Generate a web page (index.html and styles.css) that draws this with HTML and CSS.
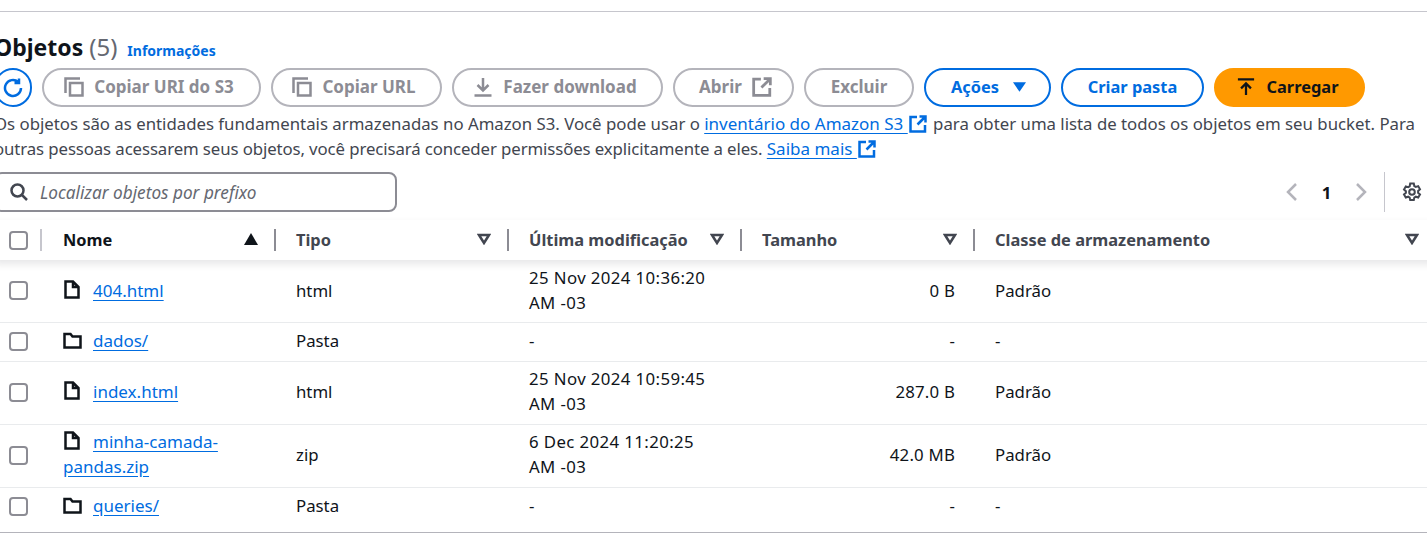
FILE: index.html
```html
<!DOCTYPE html>
<html lang="pt">
<head>
    <meta charset="UTF-8">
    <meta name="viewport" content="width=device-width, initial-scale=1.0">
    <title>Objetos</title>
    <link rel="stylesheet" href="styles.css">
</head>
<body>

    <svg class="sprites" width="0" height="0">
        <symbol id="i-copy" viewBox="0 0 20 20"><path d="M16 1.500H1.500V16M6 6h12.500v12.500H6z"/></symbol>
        <symbol id="i-download" viewBox="0 0 20 20"><path d="M10 1v12M4.500 8l5.500 5.500L15.500 8M1.500 18.500h17"/></symbol>
        <symbol id="i-external" viewBox="0 0 18 18"><path d="M8 2H1.500v14.500h14.500V10M10.500 1.500h6v6M16.500 1.500L8.500 9.500"/></symbol>
        <symbol id="i-file" viewBox="0 0 16 19"><path d="M1.500 1.500h7.500l5.500 5.500v10.500h-13zM9 1.500V7h5.500"/></symbol>
        <symbol id="i-folder" viewBox="0 0 19 17"><path d="M1.500 2h6l2 2.500h8v11h-16z"/></symbol>
        <symbol id="i-filter" viewBox="0 0 14 12"><path d="M2 2h10l-5 8z"/></symbol>
    </svg>

    <div class="page">
        <div class="top-rule"></div>

        <div class="heading">
            <h2>Objetos <span class="count">(5)</span></h2>
            <a class="info" href="#">Informações</a>
        </div>

        <div class="toolbar">
            <button class="btn btn-icon">
                <svg class="icon" viewBox="0 0 20 20"><path d="M18 10a8 8 0 1 1-2.700-6M16 0.500v4.500H11.500"/></svg>
            </button>
            <button class="btn btn-off w-uri"><svg class="icon"><use href="#i-copy"/></svg>Copiar URI do S3</button>
            <button class="btn btn-off w-url"><svg class="icon"><use href="#i-copy"/></svg>Copiar URL</button>
            <button class="btn btn-off w-down"><svg class="icon"><use href="#i-download"/></svg>Fazer download</button>
            <button class="btn btn-off w-open">Abrir<svg class="icon"><use href="#i-external"/></svg></button>
            <button class="btn btn-off w-del">Excluir</button>
            <button class="btn btn-line w-act">Ações<svg class="icon-caret" viewBox="0 0 14 10"><path d="M0 0h14L7 10z"/></svg></button>
            <button class="btn btn-line w-new">Criar pasta</button>
            <button class="btn btn-main w-up"><svg class="icon" viewBox="0 0 20 20"><path d="M1 1.500h18M10 19V6.500M4.500 11.500L10 6l5.500 5.500"/></svg>Carregar</button>
        </div>

        <p class="desc">Os objetos são as entidades fundamentais armazenadas no Amazon S3. Você pode usar o <a href="#">inventário do Amazon S3 </a><svg class="icon-link"><use href="#i-external"/></svg> para obter uma lista de todos os objetos em seu bucket. Para <span class="tight">outras pessoas acessarem seus objetos, você precisará conceder permissões explicitamente a eles.</span> <a href="#">Saiba mais </a><svg class="icon-link"><use href="#i-external"/></svg></p>

        <div class="filter-bar">
            <div class="search">
                <svg class="icon-search" viewBox="0 0 18 18"><circle cx="7.500" cy="7.500" r="6"/><path d="M12 12l5 5"/></svg>
                <span>Localizar objetos por prefixo</span>
            </div>
            <div class="pager">
                <svg class="chevron" viewBox="0 0 12 18"><path d="M10 1L2 9l8 8"/></svg>
                <span class="page-num">1</span>
                <svg class="chevron" viewBox="0 0 12 18"><path d="M2 1l8 8-8 8"/></svg>
                <span class="pager-sep"></span>
                <svg class="gear" viewBox="0 0 20 20"><path d="M8.200 1.500h3.600l.5 2.500 1.500.9 2.400-.8 1.800 3.100-1.900 1.700v1.800l1.900 1.700-1.800 3.100-2.400-.8-1.500.9-.5 2.500H8.200l-.5-2.500-1.500-.9-2.400.8-1.800-3.100 1.900-1.700V9.200L2 7.500l1.800-3.100 2.400.8 1.500-.9z"/><circle cx="10" cy="10" r="2.800"/></svg>
            </div>
        </div>

        <div class="table">
            <div class="row head">
                <div class="th th-check"><span class="box"></span></div>
                <div class="th th-name">Nome<svg class="sort" viewBox="0 0 14 12"><path d="M7 0l7 12H0z"/></svg></div>
                <div class="th">Tipo<svg class="filter"><use href="#i-filter"/></svg></div>
                <div class="th">Última modificação<svg class="filter"><use href="#i-filter"/></svg></div>
                <div class="th">Tamanho<svg class="filter"><use href="#i-filter"/></svg></div>
                <div class="th th-last">Classe de armazenamento<svg class="filter"><use href="#i-filter"/></svg></div>
            </div>

            <div class="row">
                <div class="td td-check"><span class="box"></span></div>
                <div class="td"><svg class="icon-file"><use href="#i-file"/></svg><a href="#">404.html</a></div>
                <div class="td">html</div>
                <div class="td date">25 Nov 2024 10:36:20 AM -03</div>
                <div class="td num">0 B</div>
                <div class="td">Padrão</div>
            </div>
            <div class="row">
                <div class="td td-check"><span class="box"></span></div>
                <div class="td"><svg class="icon-folder"><use href="#i-folder"/></svg><a href="#">dados/</a></div>
                <div class="td">Pasta</div>
                <div class="td">-</div>
                <div class="td num">-</div>
                <div class="td">-</div>
            </div>
            <div class="row">
                <div class="td td-check"><span class="box"></span></div>
                <div class="td"><svg class="icon-file"><use href="#i-file"/></svg><a href="#">index.html</a></div>
                <div class="td">html</div>
                <div class="td date">25 Nov 2024 10:59:45 AM -03</div>
                <div class="td num">287.0 B</div>
                <div class="td">Padrão</div>
            </div>
            <div class="row">
                <div class="td td-check"><span class="box"></span></div>
                <div class="td"><svg class="icon-file"><use href="#i-file"/></svg><a href="#">minha-camada-pandas.zip</a></div>
                <div class="td">zip</div>
                <div class="td date">6 Dec 2024 11:20:25 AM -03</div>
                <div class="td num">42.0 MB</div>
                <div class="td">Padrão</div>
            </div>
            <div class="row row-last">
                <div class="td td-check"><span class="box"></span></div>
                <div class="td"><svg class="icon-folder"><use href="#i-folder"/></svg><a href="#">queries/</a></div>
                <div class="td">Pasta</div>
                <div class="td">-</div>
                <div class="td num">-</div>
                <div class="td">-</div>
            </div>
        </div>
    </div>

</body>
</html>
```

FILE: styles.css
```css
/* The screenshot is cropped, so the page hangs off both window edges */
html, body {
    margin: 0;
    height: 542px;
    overflow: hidden;
    background-color: #fff;
}
body {
    font-family: "Noto Sans", sans-serif;
    font-size: 16.8px;
    line-height: 25px;
    color: #0f141a;
}
a {
    color: #006ce0;
}
.sprites {
    position: absolute;
}
svg {
    fill: none;
    stroke: currentColor;
    stroke-width: 2.5;
    flex: none;
}
.page {
    width: 1442px;
    margin-left: -6px;
    padding-top: 11px;
}
.top-rule {
    height: 1px;
    margin-right: -6px;
    background-color: #c6c6cd;
}

/* heading */
.heading {
    display: flex;
    align-items: baseline;
    gap: 10px;
    height: 56px;
    padding-top: 20px;
    box-sizing: border-box;
}
.heading h2 {
    margin: 0;
    font-size: 23px;
    line-height: 29px;
    font-weight: 700;
}
.count {
    font-size: 24px;
    font-weight: 400;
    color: #656871;
}
.info {
    font-size: 14px;
    font-weight: 700;
    text-decoration: none;
}

/* toolbar */
.toolbar {
    display: flex;
    gap: 10px;
}
.btn {
    display: flex;
    align-items: center;
    justify-content: center;
    gap: 10px;
    height: 39px;
    padding: 0 0 2px;
    box-sizing: border-box;
    border: 2px solid #b4b4bb;
    border-radius: 20px;
    background-color: #fff;
    font-family: inherit;
    font-size: 16.4px;
    font-weight: 700;
}
.btn .icon {
    width: 20px;
    height: 20px;
}
.btn-icon {
    width: 38px;
    padding: 0;
    border-color: #006ce0;
    color: #006ce0;
}
.btn-off {
    font-size: 17px;
    color: #8c8c94;
}
.btn-line {
    border-color: #006ce0;
    color: #006ce0;
}
.btn-main {
    gap: 12px;
    border-color: #ff9900;
    background-color: #ff9900;
    color: #0f141a;
}
.w-uri { width: 219px; padding-right: 5px; }
.w-url { width: 171px; padding-right: 5px; }
.w-down { width: 211px; padding-right: 5px; }
.w-open { width: 121px; padding-left: 4px; }
.w-del { width: 110px; }
.w-act { width: 127px; padding-left: 2px; }
.w-new { width: 143px; }
.w-up { width: 151px; padding-right: 4px; }
.w-up .icon {
    width: 18px;
    height: 20px;
}
.icon-caret {
    width: 13px;
    height: 10px;
    fill: currentColor;
    stroke: none;
    margin-left: 4px;
}

/* description */
.desc {
    width: 1422px;
    margin: 4px 0 0;
    color: #424650;
}
.desc a {
    font-size: 17px;
    text-underline-offset: 3px;
}
.tight {
    letter-spacing: -0.1px;
}
.icon-link {
    width: 18px;
    height: 18px;
    margin: 0 2px 0 1px;
    vertical-align: -3px;
    color: #006ce0;
}

/* search and pagination */
.filter-bar {
    display: flex;
    justify-content: space-between;
    align-items: center;
    width: 1428px;
    margin-top: 11px;
}
.search {
    display: flex;
    align-items: center;
    gap: 12px;
    width: 403px;
    height: 40px;
    padding-left: 14px;
    box-sizing: border-box;
    border: 2px solid #8c8c94;
    border-radius: 8px;
    font-size: 17.2px;
    font-style: italic;
    color: #656871;
}
.icon-search {
    width: 18px;
    height: 18px;
    color: #424650;
}
.pager {
    display: flex;
    align-items: center;
}
.chevron {
    width: 12px;
    height: 18px;
    color: #b4b4bb;
}
.page-num {
    width: 57px;
    text-align: center;
    font-weight: 700;
}
.pager-sep {
    width: 1px;
    height: 40px;
    margin: 0 17px;
    background-color: #c6c6cd;
}
.gear {
    width: 20px;
    height: 20px;
    stroke-width: 2;
    color: #424650;
}

/* table */
.table {
    margin-top: 8px;
}
.row {
    display: grid;
    grid-template-columns: 49px 233px 233px 233px 233px 1fr;
    box-sizing: border-box;
    min-height: 39px;
    border-bottom: 1px solid #e9ebed;
}
.row-last {
    min-height: 45px;
    padding-bottom: 6px;
    border-bottom-color: #b4b4bb;
}
.head {
    position: relative;
    height: 40px;
    border-bottom: 0;
    box-shadow: 0 4px 8px rgba(0, 7, 22, 0.1);
    align-items: center;
}
.th {
    display: flex;
    align-items: center;
    justify-content: space-between;
    box-sizing: border-box;
    height: 22px;
    padding: 0 16px 2px 20px;
    border-right: 2px solid #8c8c94;
    font-size: 16.4px;
    font-weight: 700;
    color: #424650;
}
.th-check {
    margin-right: 1px;
    padding: 0 0 0 15px;
    border-right-color: #c6c6cd;
}
.th-name {
    color: #0f141a;
}
.th-last {
    padding-right: 17px;
    border-right: 0;
}
.sort {
    width: 14px;
    height: 12px;
    fill: #0f141a;
    stroke: none;
}
.filter {
    width: 14px;
    height: 12px;
}
.td {
    padding: 4px 20px 8px;
    align-self: center;
}
.head + .row .td:not(.td-check) {
    padding: 5px 20px 7px;
}
.td-check {
    display: flex;
    align-items: center;
    margin-top: -2px;
    padding: 0 0 0 15px;
}
.td a {
    font-size: 17px;
    text-underline-offset: 3px;
}
.date {
    letter-spacing: 0.4px;
}
.num {
    letter-spacing: 0.2px;
    text-align: right;
}
.box {
    display: block;
    width: 19px;
    height: 19px;
    box-sizing: border-box;
    border: 2px solid #8c8c94;
    border-radius: 4px;
}
.icon-file {
    width: 16px;
    height: 19px;
    margin: 0 13px 0 1px;
    vertical-align: -2px;
}
.icon-folder {
    width: 19px;
    height: 17px;
    margin: 0 11px 0 0;
    vertical-align: -2px;
}
```
